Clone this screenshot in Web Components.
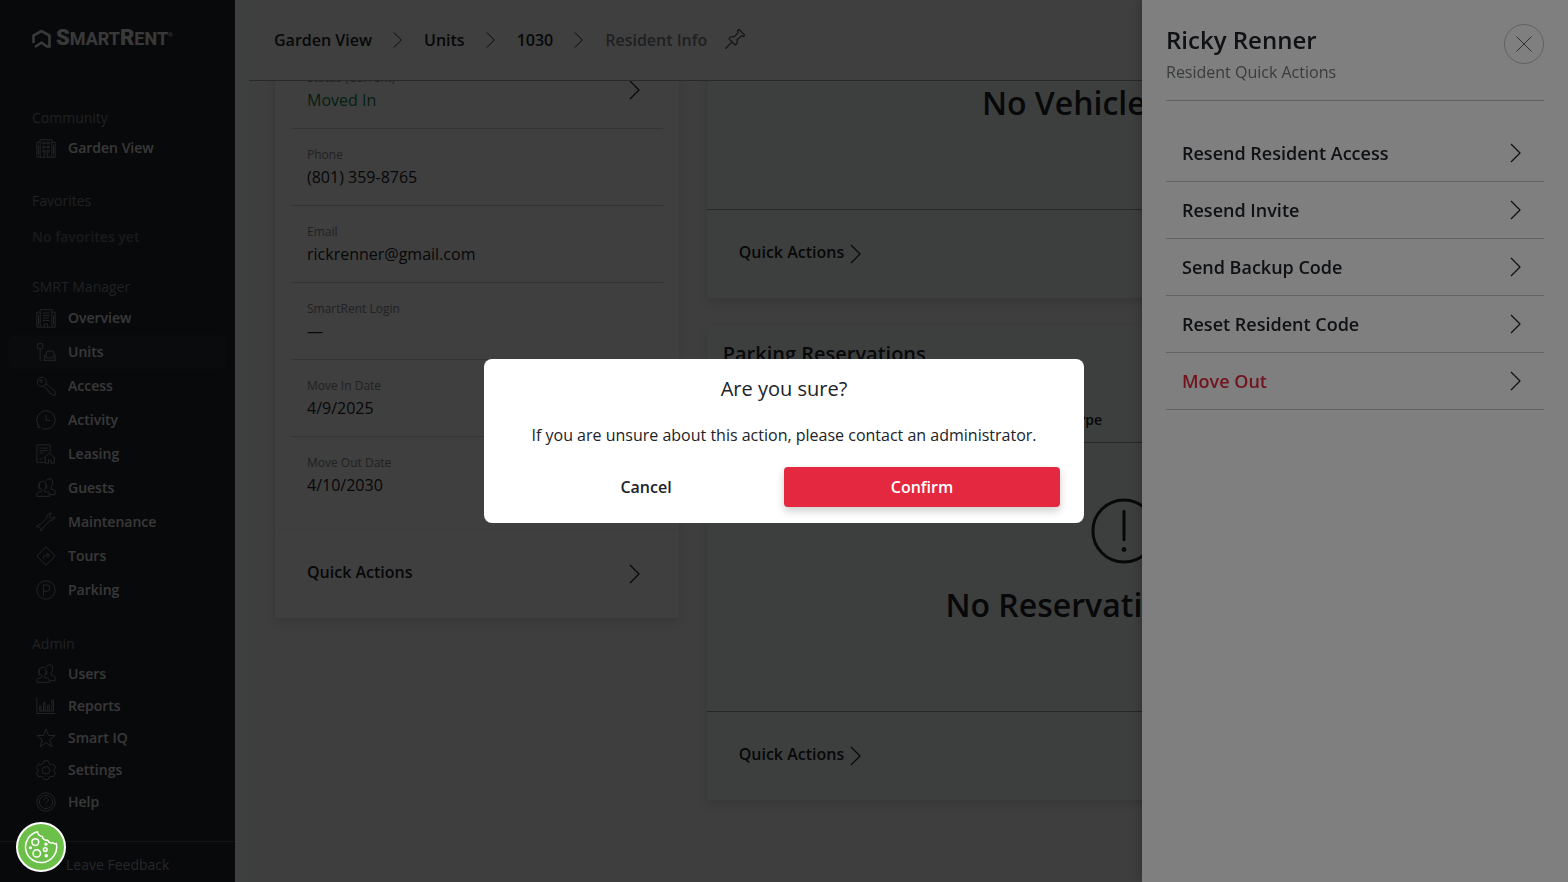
<!DOCTYPE html>
<html lang="en">
<head>
<meta charset="utf-8">
<meta name="viewport" content="width=device-width, initial-scale=1">
<title>SmartRent - Resident Info</title>
<style>
  body {
    margin: 0;
    font-family: "Open Sans", "Noto Sans", sans-serif;
    font-size: 16px;
    line-height: 24px;
    color: #202328;
  }
</style>
</head>
<body>
<resident-page></resident-page>

<script>
const ICONS = {
  chevron: '<path d="M7 3l9 9-9 9"/>',
  close: '<path d="M3 3l18 18M21 3L3 21"/>',
  pin: '<path d="M0 24l8-8M4.500 11.500l8 8M4.500 11.500c2-2.500 4.500-2.500 6.500-2L16 4l-1-2 1.800-1.500 7 7L22 9l-2-1-5.500 5c.5 2.500.5 4.500-2 6.500"/>',
  alert: '<circle cx="12" cy="12" r="11.300"/><path d="M12 4.800v10.400" stroke-linecap="round"/><circle cx="12" cy="18.700" r=".9" fill="currentColor" stroke="none"/>',
  building: '<path d="M5 23V2h14v21M1 23V5h4M19 5h4v18M1 23h22M10 23v-4h4v4"/><path d="M8 5h3v2H8zM13 5h3v2h-3zM8 10h3v2H8zM13 10h3v2h-3zM8 15h3v2H8zM13 15h3v2h-3zM3 9v11M21 9v11"/>',
  overview: '<path d="M5 23V2h14v21M1 23V5h4M19 5h4v18M1 23h22M10 23v-4h4v4M8 6h8M8 9h8M8 12h8M8 15h8M3 9v11M21 9v11"/>',
  units: '<path d="M2 2h6v6H2zM5 8v15M10 23v-7h2v3h9v-3h2v7M12 16l1-5h8l1 5M10 22h13"/>',
  key: '<circle cx="7" cy="7" r="5.500"/><circle cx="6" cy="6" r="1.500"/><path d="M12 9l11 9.500V23h-3.500l-1-2h-2v-2h-2v-2L9 12.500"/>',
  clock: '<path d="M4 19.500a11 11 0 1 1 4 2.700"/><path d="M2.500 17v4h3M12 6v6.500h5"/>',
  leasing: '<path d="M10 22H1V1h16v9M4 5h10M4 8h10M4 11h5M9 17l7-6 7 6M11 16v7h4v-4h3v4h4v-7M4 18h3"/>',
  people: '<path d="M1 22v-3c0-2 4-2 6-3v-2c-2-1-3-3-3-5 0-3 1-5 4-5s4 2 4 5c0 2-1 4-2 5v2c2 1 6 1 6 3v3zM12 4c1-2 2-3 4-3 3 0 4 2 4 5 0 2-1 4-2 5v2c2 1 5 1 5 3v4h-7M4 14c-1-4-1-8 1-9M12 13c1-1 1-3 1-5"/>',
  wrench: '<path d="M22.500 5.500L19 8l-3-3 2.500-3.500c-3-.5-6 2-5.500 5.500l-8 8c-2.500-.5-4 1-4 3l2.500-.5 2 2L5 22c3 0 4.500-2 4-4l8-8c3 .5 6-1.500 5.500-4.500z"/>',
  tours: '<path d="M12 1l11 11-11 11L1 12zM9 15v-2q0-2 2-2h5M13 8l3 3-3 3"/>',
  parking: '<circle cx="12" cy="12" r="11"/><path d="M9 19V6h4a3.700 3.700 0 0 1 0 7.500H9"/>',
  reports: '<path d="M1 2v19h22M4 18v-6h2v6M9 18V8h2v10M14 18v-7h2v7M19 18V5h2v13M4 18h17"/>',
  star: '<path d="M12 1l3 8h8l-6.500 5 2.500 8.500-7-5-7 5L7.500 14 1 9h8z"/>',
  gear: '<path d="M9.500 1h5l1 3 2.500 1.500L21 5l2.500 4-2 2.500v2l2 2.500-2.500 4-3-.5-2.500 1.500-1 2.500h-5l-1-2.500L6 19.500 3 20 .5 16l2-2.500v-2L.5 9 3 5l3 .5L8.500 4z"/><circle cx="12" cy="12.300" r="4.500"/>',
  help: '<circle cx="12" cy="12" r="11"/><circle cx="12" cy="12" r="8"/><path d="M9.500 10c0-4 5.500-3.500 5.500-.5 0 2-3 2-3 4.500M12 16v1.500"/>',
  cookie: '<path d="M9.500 1.300A11 11 0 1 0 22.800 9.500c-1 .4-1.900.2-2.600-.6-1.600.6-3-.2-3.400-1.700-2.400.3-3.800-.8-3.700-2.700C11.300 4.500 9.900 3.300 9.500 1.300z"/><circle cx="8" cy="8.500" r="2.400"/><circle cx="9" cy="16.500" r="2.600"/><circle cx="15" cy="13.800" r="1.300"/><g fill="currentColor" stroke="none"><circle cx="15.500" cy="10" r="1.100"/><circle cx="4.500" cy="12.500" r="1.100"/><circle cx="15.700" cy="18.200" r="1.200"/></g>'
};

// base class: every component renders its own template into an open shadow root
class BaseElement extends HTMLElement {
  connectedCallback() {
    if (this.shadowRoot) return;
    this.attachShadow({ mode: 'open' });
    this.shadowRoot.innerHTML = this.render();
  }
}

class SrIcon extends BaseElement {
  render() {
    const size = Number(this.getAttribute('size') || 24);
    // weight is given in screen pixels, the viewBox is always 24 wide
    const weight = Number(this.getAttribute('weight') || 1) * 24 / size;
    return `
      <style>
        :host { display: inline-flex; flex: none; }
        svg { display: block; fill: none; stroke: currentColor; }
      </style>
      <svg width="${size}" height="${size}" viewBox="0 0 24 24" stroke-width="${weight}" stroke-linejoin="round" aria-hidden="true">${ICONS[this.getAttribute('name')]}</svg>
    `;
  }
}

class SrLogo extends BaseElement {
  render() {
    return `
      <style>
        :host { display: block; }
        a {
          display: flex;
          align-items: center;
          gap: 4px;
          color: #e4e4e4;
          text-decoration: none;
          font: 700 18px/24px Roboto, sans-serif;
        }
        b { font-size: 22px; }
        small { font-size: 6px; align-self: flex-start; margin-left: -4px; line-height: 18px; }
      </style>
      <a href="#" aria-label="SmartRent">
        <svg width="20" height="20" viewBox="0 0 20 20" fill="none" stroke="currentColor" stroke-width="2.600">
          <path d="M1.500 14V6.500L9.500 2l8 4.500V17.500H15L9.500 13.500 3 18"/>
        </svg>
        <span><b>S</b>MART<b>R</b>ENT</span><small>®</small>
      </a>
    `;
  }
}

class NavGroup extends BaseElement {
  render() {
    return `
      <style>
        :host { display: block; padding-bottom: 25px; }
        :host(:last-of-type) { padding-bottom: 0; }
        h2 { margin: 0; padding: 0 24px 2px; font-size: 14px; font-weight: 400; line-height: 24px; color: #80848c; }
        nav { display: flex; flex-direction: column; }
      </style>
      <h2>${this.getAttribute('label')}</h2>
      <nav aria-label="${this.getAttribute('label')}"><slot></slot></nav>
    `;
  }
}

class NavItem extends BaseElement {
  render() {
    return `
      <style>
        :host { display: block; }
        a {
          display: flex;
          align-items: center;
          gap: 12px;
          padding: 0 28px;
          border-radius: 8px;
          line-height: 34px;
          font-size: 14px;
          font-weight: 600;
          color: #e0e0e0;
          text-decoration: none;
        }
        sr-icon { color: #8c9098; }
        :host([small]) a { line-height: 32px; }
        :host([active]) a { background: #2a2d34; }
      </style>
      <a href="#"><sr-icon name="${this.getAttribute('icon')}" size="20"></sr-icon><slot></slot></a>
    `;
  }
}

class SrSidebar extends BaseElement {
  render() {
    return `
      <style>
        :host {
          display: flex;
          flex-direction: column;
          flex: none;
          width: 235px;
          background: #20242a;
        }
        sr-logo { padding: 26px 32px 55px; }
        .groups { flex: 1; padding: 0 8px; }
        p { margin: 0; padding: 10px 24px 1px; font-size: 14px; font-weight: 600; color: #64686e; }
        footer { border-top: 1px solid #4c5054; padding: 10px 0 5px 66px; }
        footer a { font-size: 14px; color: #989ca2; text-decoration: none; }
      </style>
      <sr-logo></sr-logo>
      <div class="groups">
        <nav-group label="Community">
          <nav-item icon="building" small>Garden View</nav-item>
        </nav-group>
        <nav-group label="Favorites"><p>No favorites yet</p></nav-group>
        <nav-group label="SMRT Manager">
          <nav-item icon="overview">Overview</nav-item>
          <nav-item icon="units" active>Units</nav-item>
          <nav-item icon="key">Access</nav-item>
          <nav-item icon="clock">Activity</nav-item>
          <nav-item icon="leasing">Leasing</nav-item>
          <nav-item icon="people">Guests</nav-item>
          <nav-item icon="wrench">Maintenance</nav-item>
          <nav-item icon="tours">Tours</nav-item>
          <nav-item icon="parking">Parking</nav-item>
        </nav-group>
        <nav-group label="Admin">
          <nav-item icon="people" small>Users</nav-item>
          <nav-item icon="reports" small>Reports</nav-item>
          <nav-item icon="star" small>Smart IQ</nav-item>
          <nav-item icon="gear" small>Settings</nav-item>
          <nav-item icon="help" small>Help</nav-item>
        </nav-group>
      </div>
      <footer><a href="#">Leave Feedback</a></footer>
    `;
  }
}

class BreadcrumbBar extends BaseElement {
  render() {
    return `
      <style>
        :host {
          display: flex;
          align-items: center;
          height: 80px;
          padding: 0 25px;
          border-bottom: 1px solid #a0a4a4;
          background: #fcfcfc;
          font-weight: 600;
        }
        nav { display: flex; align-items: center; gap: 16px; }
        a { color: inherit; text-decoration: none; }
        .current { color: #7c8084; }
        button { margin-left: 18px; padding: 0; border: 0; background: none; color: #505458; }
      </style>
      <nav aria-label="Breadcrumb">
        <a href="#">Garden View</a><sr-icon name="chevron" size="20"></sr-icon>
        <a href="#">Units</a><sr-icon name="chevron" size="20"></sr-icon>
        <a href="#">1030</a><sr-icon name="chevron" size="20"></sr-icon>
        <span class="current" aria-current="page">Resident Info</span>
      </nav>
      <button type="button" aria-label="Add to favorites"><sr-icon name="pin" size="20" weight="1.250"></sr-icon></button>
    `;
  }
}

class DetailRow extends BaseElement {
  render() {
    return `
      <style>
        :host {
          display: flex;
          align-items: center;
          justify-content: space-between;
          padding: 16px;
          border-bottom: 1px solid #ccd0d0;
        }
        :host(:last-of-type) { border-bottom: 0; }
        :host([positive]) { --value: #12804c; }
        .label { font-size: 12px; line-height: 20px; color: #84888c; }
        .value { color: var(--value, inherit); }
      </style>
      <div>
        <div class="label">${this.getAttribute('label')}</div>
        <div class="value"><slot></slot></div>
      </div>
      <slot name="icon"></slot>
    `;
  }
}

class QuickActions extends BaseElement {
  render() {
    return `
      <style>
        :host { display: block; }
        button {
          display: flex;
          align-items: center;
          width: 100%;
          height: 88px;
          padding: 0 32px;
          border: 0;
          background: none;
          font: inherit;
          font-weight: 600;
          color: inherit;
        }
        :host([spread]) button { justify-content: space-between; }
        span { padding-bottom: 4px; }
      </style>
      <button type="button"><span>Quick Actions</span><sr-icon name="chevron" weight="1.250"></sr-icon></button>
    `;
  }
}

class SrCard extends BaseElement {
  render() {
    return `
      <style>
        :host {
          display: block;
          background: var(--card, #fcfcfc);
          box-shadow: 0 4px 8px rgba(0, 0, 0, 0.12);
        }
        footer { border-top: 1px solid var(--rule, #f0f0f0); }
      </style>
      <slot></slot>
      <footer><slot name="footer"></slot></footer>
    `;
  }
}

class EmptyState extends BaseElement {
  render() {
    return `
      <style>
        :host {
          display: flex;
          flex-direction: column;
          align-items: center;
          gap: 17px;
          padding: 55px 16px 82px;
        }
        :host([compact]) { padding-top: 27px; }
        h3 { margin: 0; font-size: 32px; line-height: 48px; font-weight: 600; }
      </style>
      <slot name="icon"></slot>
      <h3><slot></slot></h3>
    `;
  }
}

class ReservationTable extends BaseElement {
  render() {
    return `
      <style>
        :host { display: block; }
        h2 { margin: 0; padding: 16px 16px 32px; font-size: 20px; line-height: 24px; font-weight: 600; }
        table { width: 100%; border-collapse: collapse; border-bottom: 1px solid #90a09c; }
        th { padding: 10px 4px; font-size: 14px; line-height: 24px; font-weight: 600; text-align: left; }
        .space { width: 43%; }
      </style>
      <h2 id="title">Parking Reservations</h2>
      <table aria-labelledby="title">
        <thead><tr><th class="space"></th><th>Type</th></tr></thead>
      </table>
    `;
  }
}

class ResidentContent extends BaseElement {
  connectedCallback() {
    super.connectedCallback();
    // open the page at the resident status row
    this.scrollTop = 53;
  }

  render() {
    return `
      <style>
        :host { display: block; flex: 1; min-height: 0; overflow-y: auto; scrollbar-width: none; }
        .grid {
          display: grid;
          grid-template-columns: repeat(12, 1fr);
          gap: 28px;
          align-items: start;
          padding: 24px 26px 88px;
        }
        .details { grid-column: span 4; }
        .lists { grid-column: span 8; display: grid; gap: 28px; --card: #f6fefb; --rule: #90a09c; }
        .rows { padding: 0 16px 16px; }
      </style>
      <div class="grid">
        <sr-card class="details">
          <div class="rows">
            <detail-row label="Status (Current)" positive>Moved In<sr-icon slot="icon" name="chevron" weight="1.250"></sr-icon></detail-row>
            <detail-row label="Phone">(801) 359-8765</detail-row>
            <detail-row label="Email">rickrenner@gmail.com</detail-row>
            <detail-row label="SmartRent Login">—</detail-row>
            <detail-row label="Move In Date">4/9/2025</detail-row>
            <detail-row label="Move Out Date">4/10/2030</detail-row>
          </div>
          <quick-actions slot="footer" spread></quick-actions>
        </sr-card>
        <div class="lists">
          <sr-card>
            <empty-state compact>No Vehicles Found</empty-state>
            <quick-actions slot="footer"></quick-actions>
          </sr-card>
          <sr-card>
            <reservation-table></reservation-table>
            <empty-state><sr-icon slot="icon" name="alert" size="66" weight="3"></sr-icon>No Reservations Found</empty-state>
            <quick-actions slot="footer"></quick-actions>
          </sr-card>
        </div>
      </div>
    `;
  }
}

class DrawerAction extends BaseElement {
  render() {
    return `
      <style>
        :host { display: block; border-bottom: 1px solid #c4c8c8; }
        button {
          display: flex;
          align-items: center;
          justify-content: space-between;
          width: 100%;
          padding: 16px;
          border: 0;
          background: none;
          font: inherit;
          font-size: 18px;
          line-height: 24px;
          font-weight: 600;
          color: inherit;
        }
        :host([danger]) span { color: #e4283f; }
      </style>
      <button type="button"><span><slot></slot></span><sr-icon name="chevron" weight="1.250"></sr-icon></button>
    `;
  }
}

class ActionDrawer extends BaseElement {
  render() {
    return `
      <style>
        :host {
          position: fixed;
          inset: 0 0 0 auto;
          width: 426px;
          max-width: 100%;
          box-sizing: border-box;
          padding: 24px;
          background: #fff;
          box-shadow: -2px 0 12px rgba(0, 0, 0, 0.2);
        }
        header {
          display: flex;
          align-items: flex-start;
          justify-content: space-between;
          padding-bottom: 16px;
          margin-bottom: 24px;
          border-bottom: 1px solid #c0c4c4;
        }
        h2 { margin: 0; font-size: 24px; line-height: 32px; font-weight: 600; }
        p { margin: 4px 0 0; color: #72767a; }
        button {
          display: grid;
          place-items: center;
          width: 40px;
          height: 40px;
          padding: 0;
          border: 1px solid #c0c4c4;
          border-radius: 50%;
          background: none;
          color: #606468;
        }
      </style>
      <header>
        <div>
          <h2>Ricky Renner</h2>
          <p>Resident Quick Actions</p>
        </div>
        <button type="button" aria-label="Close"><sr-icon name="close" size="20"></sr-icon></button>
      </header>
      <drawer-action>Resend Resident Access</drawer-action>
      <drawer-action>Resend Invite</drawer-action>
      <drawer-action>Send Backup Code</drawer-action>
      <drawer-action>Reset Resident Code</drawer-action>
      <drawer-action danger>Move Out</drawer-action>
    `;
  }
}

class ConfirmModal extends BaseElement {
  render() {
    return `
      <style>
        :host { display: grid; place-items: center; }
        section {
          width: 600px;
          max-width: 100%;
          box-sizing: border-box;
          padding: 16px 24px;
          border-radius: 8px;
          background: #fff;
          text-align: center;
        }
        h2 { margin: 0; font-size: 20px; line-height: 28px; font-weight: 400; }
        p { margin: 20px 0; }
        .buttons { display: grid; grid-template-columns: 1fr 1fr; }
        button {
          height: 40px;
          border: 0;
          border-radius: 4px;
          background: none;
          font: inherit;
          font-weight: 600;
          color: inherit;
        }
        .confirm { background: #e4283f; color: #fff; box-shadow: 0 4px 8px rgba(0, 0, 0, 0.2); }
      </style>
      <section role="alertdialog" aria-labelledby="title" aria-describedby="text">
        <h2 id="title">Are you sure?</h2>
        <p id="text">If you are unsure about this action, please contact an administrator.</p>
        <div class="buttons">
          <button type="button">Cancel</button>
          <button type="button" class="confirm">Confirm</button>
        </div>
      </section>
    `;
  }
}

class CookieButton extends BaseElement {
  render() {
    return `
      <style>
        :host { position: fixed; left: 16px; bottom: 10px; }
        button {
          display: grid;
          place-items: center;
          width: 50px;
          height: 50px;
          padding: 0;
          border: 2px solid #fff;
          border-radius: 50%;
          background: #6cc04a;
          color: #fff;
        }
      </style>
      <button type="button" aria-label="Cookie preferences"><sr-icon name="cookie" size="34" weight="1.500"></sr-icon></button>
    `;
  }
}

class ResidentPage extends BaseElement {
  render() {
    return `
      <style>
        :host { display: flex; height: 100vh; overflow: hidden; background: #fafefc; }
        main { display: flex; flex-direction: column; flex: 1; min-width: 0; margin-left: 14px; background: #f8f8f8; }
        .scrim, confirm-modal { position: fixed; inset: 0; background: rgba(0, 0, 0, 0.5); }
      </style>
      <sr-sidebar></sr-sidebar>
      <main>
        <breadcrumb-bar></breadcrumb-bar>
        <resident-content></resident-content>
      </main>
      <div class="scrim"></div>
      <action-drawer></action-drawer>
      <confirm-modal></confirm-modal>
      <cookie-button></cookie-button>
    `;
  }
}

customElements.define('sr-icon', SrIcon);
customElements.define('sr-logo', SrLogo);
customElements.define('nav-group', NavGroup);
customElements.define('nav-item', NavItem);
customElements.define('sr-sidebar', SrSidebar);
customElements.define('breadcrumb-bar', BreadcrumbBar);
customElements.define('detail-row', DetailRow);
customElements.define('quick-actions', QuickActions);
customElements.define('sr-card', SrCard);
customElements.define('empty-state', EmptyState);
customElements.define('reservation-table', ReservationTable);
customElements.define('resident-content', ResidentContent);
customElements.define('drawer-action', DrawerAction);
customElements.define('action-drawer', ActionDrawer);
customElements.define('confirm-modal', ConfirmModal);
customElements.define('cookie-button', CookieButton);
customElements.define('resident-page', ResidentPage);
</script>
</body>
</html>
